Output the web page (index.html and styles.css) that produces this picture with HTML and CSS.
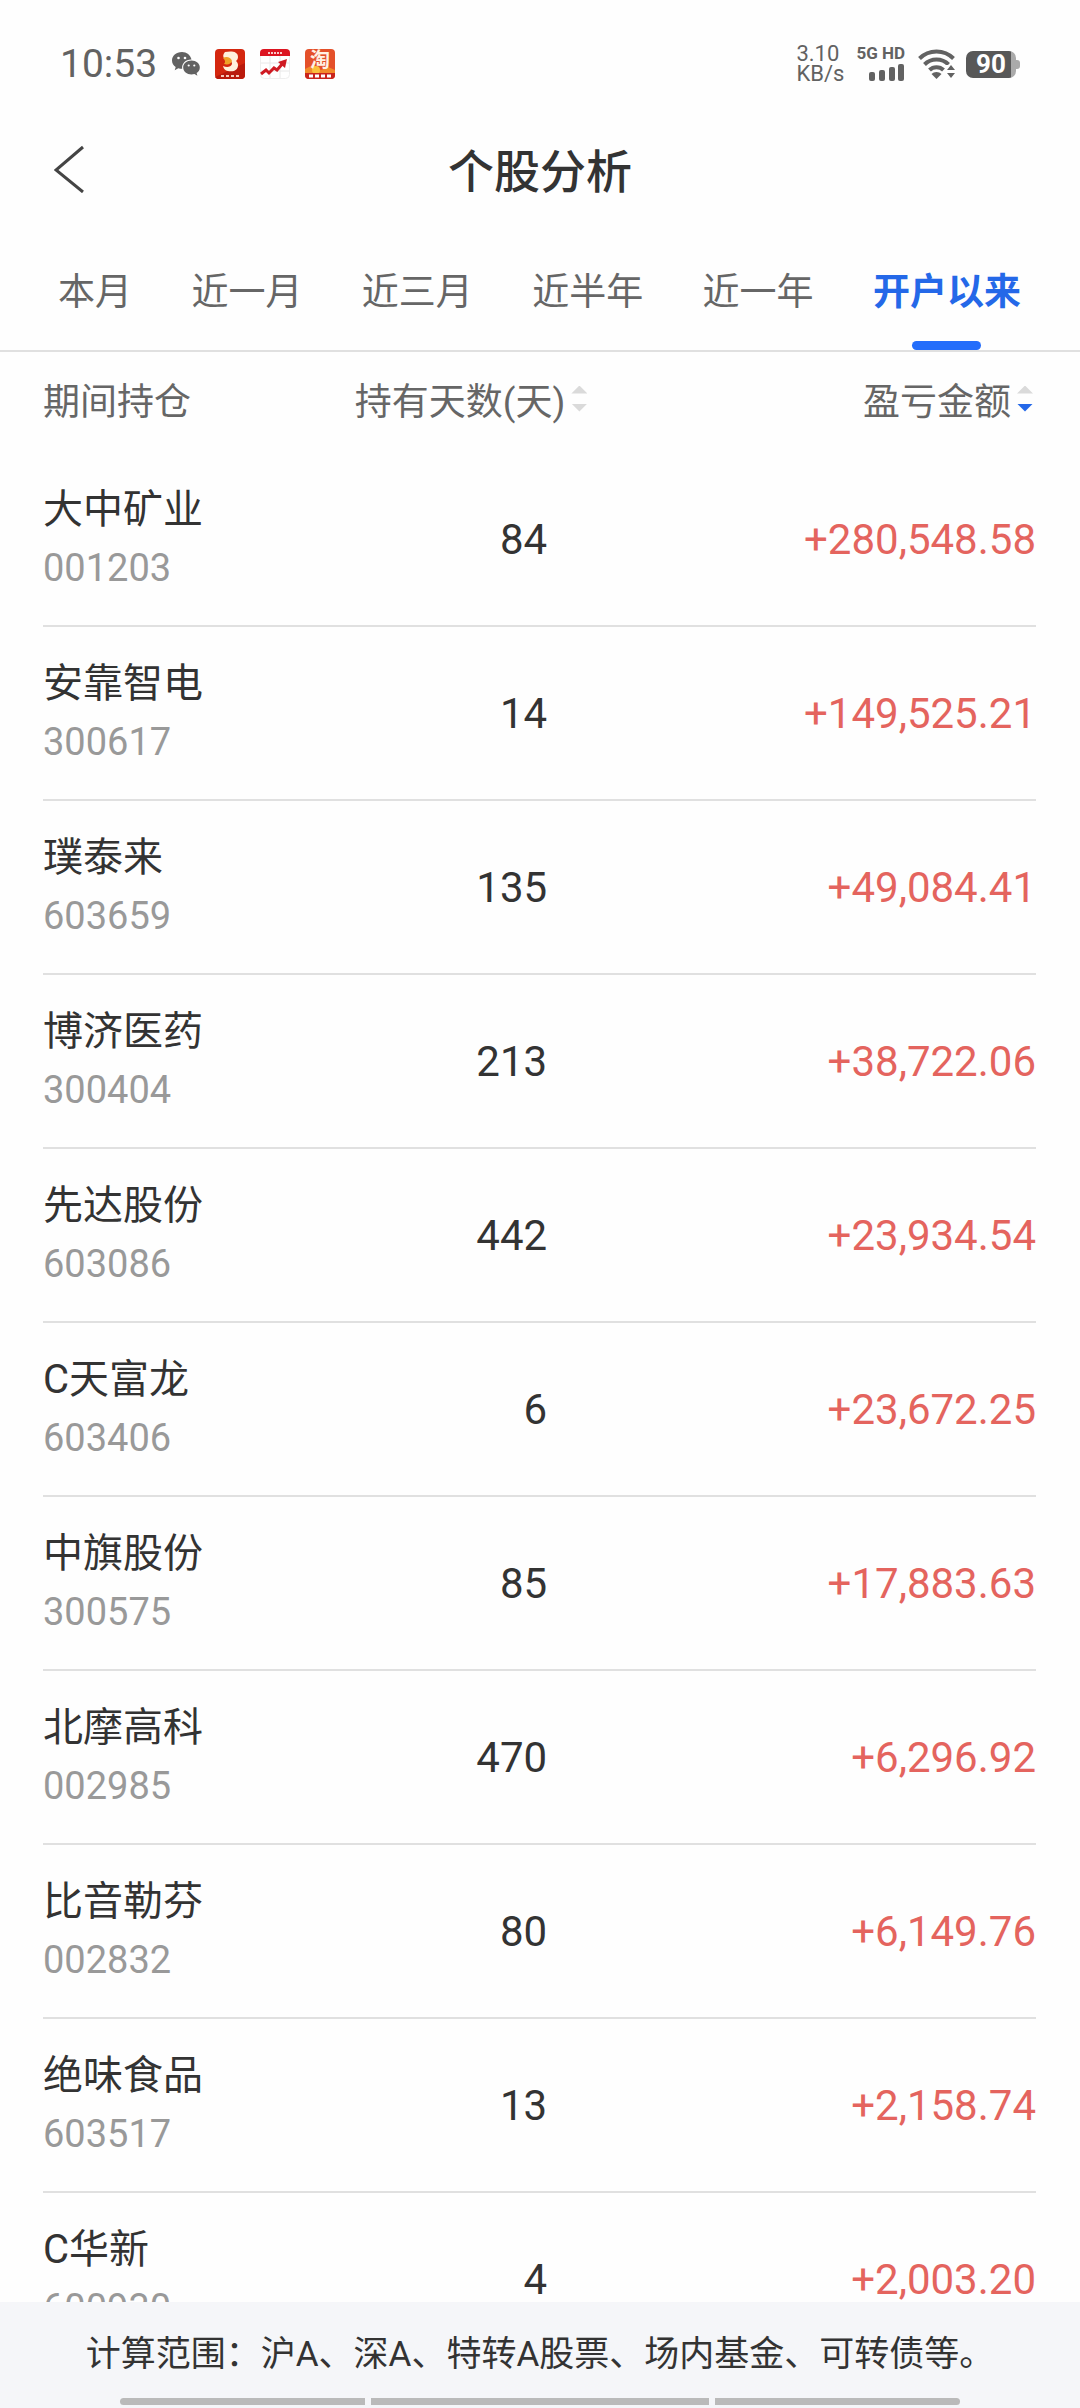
FILE: index.html
```html
<!DOCTYPE html>
<html lang="zh-CN">
<head>
<meta charset="utf-8">
<meta name="viewport" content="width=device-width, initial-scale=1">
<title>个股分析</title>
<link rel="stylesheet" href="styles.css">
</head>
<body>
<div class="status">
  <span class="clock">10:53</span>
  <svg class="wechat" width="30" height="26" viewBox="0 0 30 26" aria-hidden="true">
    <path fill="#626262" d="M11 1C5 1 1 5 1 9.500c0 2.700 1.400 5 3.700 6.500l-1 3.200 3.600-2c1.200.4 2.400.5 3.900.5-.9-5 3.500-9.400 9.300-9.200C19.500 4 15.700 1 11 1z"/>
    <path fill="#626262" d="M20.500 9.500c-4.700 0-8.300 3.100-8.300 7s3.600 7 8.300 7c1 0 2-.1 2.900-.4l3 1.700-.8-2.700c2-1.300 3.200-3.300 3.200-5.600 0-3.900-3.600-7-8.300-7z"/>
    <g fill="#fff"><circle cx="7.500" cy="7" r="1.300"/><circle cx="14" cy="7" r="1.300"/><circle cx="17.700" cy="14.500" r="1.100"/><circle cx="23.300" cy="14.500" r="1.100"/></g>
  </svg>
  <svg class="app" width="30" height="30" viewBox="0 0 30 30" aria-hidden="true">
    <rect width="30" height="30" rx="4" fill="#d4270f"/>
    <path d="M0 28L30 14v12a4 4 0 0 1-4 4H4a4 4 0 0 1-4-2z" fill="#b91a0c"/>
    <path d="M10 3c6-1 13-1 13 5 0 2-1 3-2 4 3 2 3 8-2 10-5 1-10 0-11-5 4 2 8 1 9-2 0-3-2-4-5-4-4-1-5-5-2-8z" fill="#fff1dc"/>
    <path d="M8 9c3-2 8-1 9 3-1 3-4 4-8 3 2-2 1-4-1-6z" fill="#efa127"/>
    <path d="M6 27h3M11 27h3M16 27h3M21 27h3" stroke="#f5c9ba" stroke-width="2"/>
  </svg>
  <svg class="app" width="30" height="30" viewBox="0 0 30 30" aria-hidden="true">
    <rect x=".5" y=".5" width="29" height="29" rx="4" fill="#fff" stroke="#eee"/>
    <path d="M10 7v22M20 7v22M1 14h28M1 22h28" stroke="#e8e8e8"/>
    <path d="M0 7V4a4 4 0 0 1 4-4h22a4 4 0 0 1 4 4v3z" fill="#dc1420"/>
    <path d="M8 4h14" stroke="#f9c6c6" stroke-width="2" stroke-dasharray="2 1"/>
    <path d="M1 25l5-4 3 3 5-5 3 2 7-8" fill="none" stroke="#cf1a22" stroke-width="3"/>
    <path d="M18 13l9-3-2 9z" fill="#cf1a22"/>
  </svg>
  <svg class="app" width="30" height="30" viewBox="0 0 30 30" aria-hidden="true">
    <rect width="30" height="30" rx="4" fill="#e4502a"/>
    <path d="M0 20l8-4 8 5 7-3 7 3v5H0z" fill="#f28a2b"/>
    <circle cx="11" cy="21" r="4" fill="#fbbf3b"/>
    <path d="M0 24h30v2a4 4 0 0 1-4 4H4a4 4 0 0 1-4-4z" fill="#c9241c"/>
    <text class="tao" x="5" y="18">淘</text>
    <path d="M4 27h4M10 27h4M16 27h4M22 27h4" stroke="#fff" stroke-width="3"/>
  </svg>
  <div class="speed"><span>3.10</span><span>KB/s</span></div>
  <div class="signal">
    <span>5G HD</span>
    <svg width="36" height="18" viewBox="0 0 36 18" aria-hidden="true"><g fill="#626262"><rect y="8" width="6" height="9" rx="2"/><rect x="10" y="6" width="6" height="11" rx="2"/><rect x="20" y="3" width="6" height="14" rx="2"/><rect x="29" width="6" height="17" rx="2"/></g></svg>
  </div>
  <svg class="wifi" width="38" height="30" viewBox="0 0 38 30" aria-hidden="true">
    <g fill="none" stroke="#626262" stroke-width="4"><path d="M1.500 9.500a24 24 0 0 1 34 0"/><path d="M6.500 15.500a17 17 0 0 1 24 0"/><path d="M11.500 21a10 10 0 0 1 14 0"/></g>
    <path fill="#626262" d="M13.500 25a7 7 0 0 1 10 0l-5 5z"/>
    <path d="M28 16h10v14H28z" fill="#fff"/>
    <path fill="#626262" d="M29 21l4-5 4 5zM29 24l4 5 4-5z"/>
  </svg>
  <div class="battery"><span>90</span></div>
</div>

<header class="bar">
  <button class="back" aria-label="返回"><svg width="32" height="50" viewBox="0 0 32 50" aria-hidden="true"><path d="M29 4L2 27l27 22" fill="none" stroke="#444" stroke-width="3"/></svg></button>
  <h1>个股分析</h1>
</header>

<nav class="tabs">
  <button>本月</button>
  <button>近一月</button>
  <button>近三月</button>
  <button>近半年</button>
  <button>近一年</button>
  <button class="on">开户以来</button>
</nav>

<main class="list">
  <table>
    <colgroup><col class="c-name"><col class="c-days"><col></colgroup>
    <thead>
      <tr>
        <th>期间持仓</th>
        <th><button class="sort">持有天数(天)<i class="arrows"></i></button></th>
        <th class="end"><button class="sort desc">盈亏金额<i class="arrows"></i></button></th>
      </tr>
    </thead>
    <tbody>
      <tr><td><b>大中矿业</b><small>001203</small></td><td>84</td><td>+280,548.58</td></tr>
      <tr><td><b>安靠智电</b><small>300617</small></td><td>14</td><td>+149,525.21</td></tr>
      <tr><td><b>璞泰来</b><small>603659</small></td><td>135</td><td>+49,084.41</td></tr>
      <tr><td><b>博济医药</b><small>300404</small></td><td>213</td><td>+38,722.06</td></tr>
      <tr><td><b>先达股份</b><small>603086</small></td><td>442</td><td>+23,934.54</td></tr>
      <tr><td><b>C天富龙</b><small>603406</small></td><td>6</td><td>+23,672.25</td></tr>
      <tr><td><b>中旗股份</b><small>300575</small></td><td>85</td><td>+17,883.63</td></tr>
      <tr><td><b>北摩高科</b><small>002985</small></td><td>470</td><td>+6,296.92</td></tr>
      <tr><td><b>比音勒芬</b><small>002832</small></td><td>80</td><td>+6,149.76</td></tr>
      <tr><td><b>绝味食品</b><small>603517</small></td><td>13</td><td>+2,158.74</td></tr>
      <tr><td><b>C华新</b><small>600930</small></td><td>4</td><td>+2,003.20</td></tr>
    </tbody>
  </table>
</main>

<footer class="foot">
  <p>计算范围：沪A、深A、特转A股票、场内基金、可转债等。</p>
  <div class="gesture"><i></i><i></i><i></i></div>
</footer>
</body>
</html>
```
FILE: styles.css
```css
* { box-sizing: border-box; }
body {
  margin: 0;
  height: 100vh;
  display: flex;
  flex-direction: column;
  background: #fefefe;
  color: #333;
  font-family: Roboto, "Noto Sans CJK SC", sans-serif;
}
button {
  border: 0;
  padding: 0;
  background: none;
  color: inherit;
  font: inherit;
}
svg { display: block; flex: none; }

/* system status bar */
.status {
  flex: none;
  display: flex;
  align-items: center;
  height: 128px;
  padding: 0 64px 0 60px;
  color: #626262;
}
.clock { font-size: 39px; margin-right: 14px; }
.wechat { margin-right: 14px; }
.app { margin-right: 15px; }
.tao { font-size: 20px; font-weight: 700; fill: #fff2e4; }
.speed {
  display: flex;
  flex-direction: column;
  margin-left: auto;
  font-size: 22px;
  line-height: 20px;
}
.signal {
  display: flex;
  flex-direction: column;
  align-items: flex-end;
  gap: 4px;
  margin: 0 13px 0 12px;
  font-size: 17px;
  line-height: 14px;
  font-weight: 700;
}
.battery {
  display: flex;
  margin-left: 10px;
  width: 50px;
  height: 27px;
  border-radius: 7px;
  background: linear-gradient(90deg, #585858 90%, #aaa 90%);
  color: #fff;
  font-size: 26px;
  line-height: 27px;
  font-weight: 700;
  position: relative;
}
.battery span { margin: auto; }
.battery::after {
  content: "";
  position: absolute;
  right: -4px;
  top: 9px;
  width: 4px;
  height: 9px;
  border-radius: 0 3px 3px 0;
  background: #aaa;
}

/* title bar */
.bar {
  flex: none;
  display: grid;
  grid-template-columns: 1fr auto 1fr;
  align-items: center;
  height: 80px;
  padding: 0 54px;
}
.back { justify-self: start; }
.bar h1 {
  margin: 0;
  font-size: 46px;
  font-weight: 500;
}

/* period tabs */
.tabs {
  flex: none;
  display: flex;
  justify-content: space-between;
  height: 144px;
  padding: 0 59px 0 58px;
  border-bottom: 2px solid #e0e0e0;
  color: #666;
  font-size: 37px;
}
.tabs button {
  display: flex;
  flex-direction: column;
  align-items: center;
  padding-top: 58px;
  line-height: 54px;
}
.tabs .on { color: #2468e8; font-weight: 700; }
.tabs .on::after {
  content: "";
  width: 69px;
  height: 9px;
  margin-top: auto;
  border-radius: 5px;
  background: #236dfb;
}

/* holdings table */
.list {
  flex: 1;
  min-height: 0;
  overflow-y: auto;
  scrollbar-width: none;
  padding: 0 44px 0 43px;
}
table {
  width: 100%;
  table-layout: fixed;
  border-spacing: 0;
}
.c-name { width: 31.4%; }
.c-days { width: 23.6%; }
th {
  height: 101px;
  padding: 0 0 8px;
  color: #666;
  font-size: 37px;
  font-weight: 400;
  text-align: left;
}
.sort {
  display: inline-flex;
  align-items: center;
  gap: 6px;
}
.end { text-align: right; padding-right: 3px; }
.arrows {
  display: flex;
  flex-direction: column;
  gap: 10px;
}
.arrows::before, .arrows::after {
  content: "";
  width: 16px;
  height: 8px;
  background: #dadada;
  clip-path: polygon(50% 0, 100% 100%, 0 100%);
}
.arrows::after { clip-path: polygon(0 0, 100% 0, 50% 100%); }
.desc .arrows::after { background: #2468e8; }
td {
  height: 174px;
  padding: 0;
  border-bottom: 2px solid #e0e0e0;
  font-size: 42px;
  text-align: right;
}
td:first-child { text-align: left; }
td:nth-child(2) { padding-right: 42px; }
td:last-child { color: #e4645e; }
td b, td small {
  display: block;
  line-height: 59px;
  font-weight: 400;
}
td b { font-size: 40px; }
td small { font-size: 38px; color: #999; }

/* footnote and gesture bar */
.foot {
  flex: none;
  background: #f5f6f9;
  padding: 27px 0 3px;
}
.foot p {
  margin: 0;
  font-size: 35px;
  line-height: 52px;
  text-align: center;
}
.gesture {
  display: flex;
  gap: 6px;
  margin: 17px 120px 0;
}
.gesture i {
  flex: 245;
  height: 7px;
  background: #bababa;
}
.gesture i:nth-child(2) { flex: 338; }
.gesture i:first-child { border-radius: 4px 0 0 4px; }
.gesture i:last-child { border-radius: 0 4px 4px 0; }
```
